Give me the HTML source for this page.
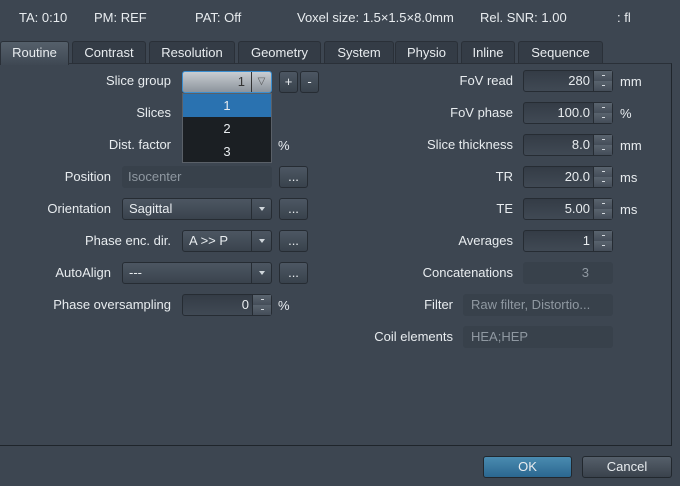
<!DOCTYPE html>
<html><head><style>
*{margin:0;padding:0;box-sizing:border-box}
body{width:680px;height:486px;background:#3d4651;font-family:"Liberation Sans",sans-serif;font-size:13px;color:#e8ecef;position:relative;overflow:hidden}
.a{position:absolute;white-space:nowrap}
.lbl{position:absolute;text-align:right;white-space:nowrap;line-height:22px}
.tab{position:absolute;top:41px;height:22px;background:#343c46;border:1px solid #2a3038;border-bottom:none;border-radius:3px 3px 0 0;text-align:center;line-height:21px;color:#e8ecef}
.ctl{position:absolute;height:22px;border:1px solid #262c33;border-radius:3px;background:linear-gradient(#4c5662,#3a434d);line-height:20px}
.sp{position:absolute;height:22px;border:1px solid #262c33;border-radius:3px;background:linear-gradient(#343c46,#404954)}
.sp .v{position:absolute;right:22px;top:0;line-height:20px}
.sp .b{position:absolute;right:0;width:19px;height:10px;border-left:1px solid #262c33;background:linear-gradient(#59636e,#444d58)}
.sp .b::after{content:"";position:absolute;left:8px;top:4px;width:3px;height:1px;background:#d5dadf}
.btn{position:absolute;width:29px;height:22px;border:1px solid #262c33;border-radius:3px;background:linear-gradient(#4d5763,#39424c);text-align:center;line-height:20px}
.arr{position:absolute;right:0;top:0;width:20px;height:20px;border-left:1px solid #262c33}
.arr::after{content:"";position:absolute;left:7px;top:8px;border-left:3px solid transparent;border-right:3px solid transparent;border-top:4px solid #d0d6db}
.dis{position:absolute;height:22px;border-radius:3px;background:#38414b;color:#8f98a1;line-height:22px}
</style></head><body>
<div class="a" style="top:10px;left:19px">TA: 0:10</div>
<div class="a" style="top:10px;left:94px">PM: REF</div>
<div class="a" style="top:10px;left:195px">PAT: Off</div>
<div class="a" style="top:10px;left:297px">Voxel size: 1.5×1.5×8.0mm</div>
<div class="a" style="top:10px;left:480px">Rel. SNR: 1.00</div>
<div class="a" style="top:10px;left:617px">: fl</div>

<div style="position:absolute;left:0;top:63px;width:672px;height:383px;border-right:1px solid #1f252b;border-bottom:1px solid #1f252b;border-top:1px solid #2a3038"></div>
<div class="tab" style="left:0;width:69px;background:linear-gradient(#55606b,#3f4853);height:24px">Routine</div>
<div class="tab" style="left:72px;width:74px">Contrast</div>
<div class="tab" style="left:149px;width:86px">Resolution</div>
<div class="tab" style="left:238px;width:83px">Geometry</div>
<div class="tab" style="left:324px;width:70px">System</div>
<div class="tab" style="left:395px;width:63px">Physio</div>
<div class="tab" style="left:461px;width:54px">Inline</div>
<div class="tab" style="left:518px;width:85px">Sequence</div>

<div class="lbl" style="left:0;width:171px;top:70px">Slice group</div>
<div class="lbl" style="left:0;width:171px;top:102px">Slices</div>
<div class="lbl" style="left:0;width:171px;top:134px">Dist. factor</div>
<div class="a" style="left:278px;top:138px">%</div>
<div class="lbl" style="left:0;width:111px;top:166px">Position</div>
<div class="lbl" style="left:0;width:111px;top:198px">Orientation</div>
<div class="lbl" style="left:0;width:171px;top:230px">Phase enc. dir.</div>
<div class="lbl" style="left:0;width:111px;top:262px">AutoAlign</div>
<div class="lbl" style="left:0;width:171px;top:294px">Phase oversampling</div>

<div class="dis" style="left:122px;top:166px;width:150px;padding-left:6px">Isocenter</div>
<div class="btn" style="left:279px;top:166px">...</div>
<div class="ctl" style="left:122px;top:198px;width:150px;padding-left:6px">Sagittal<div class="arr"></div></div>
<div class="btn" style="left:279px;top:198px">...</div>
<div class="ctl" style="left:182px;top:230px;width:90px;padding-left:6px">A &gt;&gt; P<div class="arr"></div></div>
<div class="btn" style="left:279px;top:230px">...</div>
<div class="ctl" style="left:122px;top:262px;width:150px;padding-left:6px">---<div class="arr"></div></div>
<div class="btn" style="left:279px;top:262px">...</div>
<div class="sp" style="left:182px;top:294px;width:90px"><span class="v">0</span><div class="b" style="top:0"></div><div class="b" style="top:10px"></div></div>
<div class="a" style="left:278px;top:298px">%</div>

<div style="position:absolute;left:182px;top:71px;width:90px;height:22px;border:1px solid #3a8ed0;border-radius:3px;background:linear-gradient(#c8cdd2,#8c949c)"><span style="position:absolute;right:26px;top:2px;color:#333">1</span><div style="position:absolute;right:0;top:0;width:20px;height:20px;border-left:1px solid #333;text-align:center;color:#555;font-size:10px;line-height:20px">▽</div></div>
<div class="btn" style="left:279px;top:71px;width:19px">+</div>
<div class="btn" style="left:300px;top:71px;width:19px">-</div>
<div style="position:absolute;left:182px;top:93px;width:90px;height:70px;background:#1b1f23;border:1px solid #5a6068">
<div style="height:23px;background:#2a72b0;text-align:center;line-height:23px">1</div>
<div style="height:23px;text-align:center;line-height:23px">2</div>
<div style="height:23px;text-align:center;line-height:23px">3</div></div>

<div class="lbl" style="left:340px;width:173px;top:70px">FoV read</div>
<div class="lbl" style="left:340px;width:173px;top:102px">FoV phase</div>
<div class="lbl" style="left:340px;width:173px;top:134px">Slice thickness</div>
<div class="lbl" style="left:340px;width:173px;top:166px">TR</div>
<div class="lbl" style="left:340px;width:173px;top:198px">TE</div>
<div class="lbl" style="left:340px;width:173px;top:230px">Averages</div>
<div class="lbl" style="left:340px;width:173px;top:262px">Concatenations</div>
<div class="lbl" style="left:340px;width:113px;top:294px">Filter</div>
<div class="lbl" style="left:340px;width:113px;top:326px">Coil elements</div>

<div class="sp" style="left:523px;top:70px;width:90px"><span class="v">280</span><div class="b" style="top:0"></div><div class="b" style="top:10px"></div></div>
<div class="a" style="left:620px;top:74px">mm</div>
<div class="sp" style="left:523px;top:102px;width:90px"><span class="v">100.0</span><div class="b" style="top:0"></div><div class="b" style="top:10px"></div></div>
<div class="a" style="left:620px;top:106px">%</div>
<div class="sp" style="left:523px;top:134px;width:90px"><span class="v">8.0</span><div class="b" style="top:0"></div><div class="b" style="top:10px"></div></div>
<div class="a" style="left:620px;top:138px">mm</div>
<div class="sp" style="left:523px;top:166px;width:90px"><span class="v">20.0</span><div class="b" style="top:0"></div><div class="b" style="top:10px"></div></div>
<div class="a" style="left:620px;top:170px">ms</div>
<div class="sp" style="left:523px;top:198px;width:90px"><span class="v">5.00</span><div class="b" style="top:0"></div><div class="b" style="top:10px"></div></div>
<div class="a" style="left:620px;top:202px">ms</div>
<div class="sp" style="left:523px;top:230px;width:90px"><span class="v">1</span><div class="b" style="top:0"></div><div class="b" style="top:10px"></div></div>
<div class="dis" style="left:523px;top:262px;width:90px"><span style="position:absolute;right:24px">3</span></div>
<div class="dis" style="left:463px;top:294px;width:150px;padding-left:8px">Raw filter, Distortio...</div>
<div class="dis" style="left:463px;top:326px;width:150px;padding-left:8px">HEA;HEP</div>

<div style="position:absolute;left:483px;top:456px;width:89px;height:22px;border:1px solid #22282e;border-radius:3px;background:linear-gradient(#4a8bb0,#2b6790);text-align:center;line-height:20px">OK</div>
<div style="position:absolute;left:582px;top:456px;width:90px;height:22px;border:1px solid #22282e;border-radius:3px;background:linear-gradient(#555f6a,#3a424c);text-align:center;line-height:20px">Cancel</div>
</body></html>
